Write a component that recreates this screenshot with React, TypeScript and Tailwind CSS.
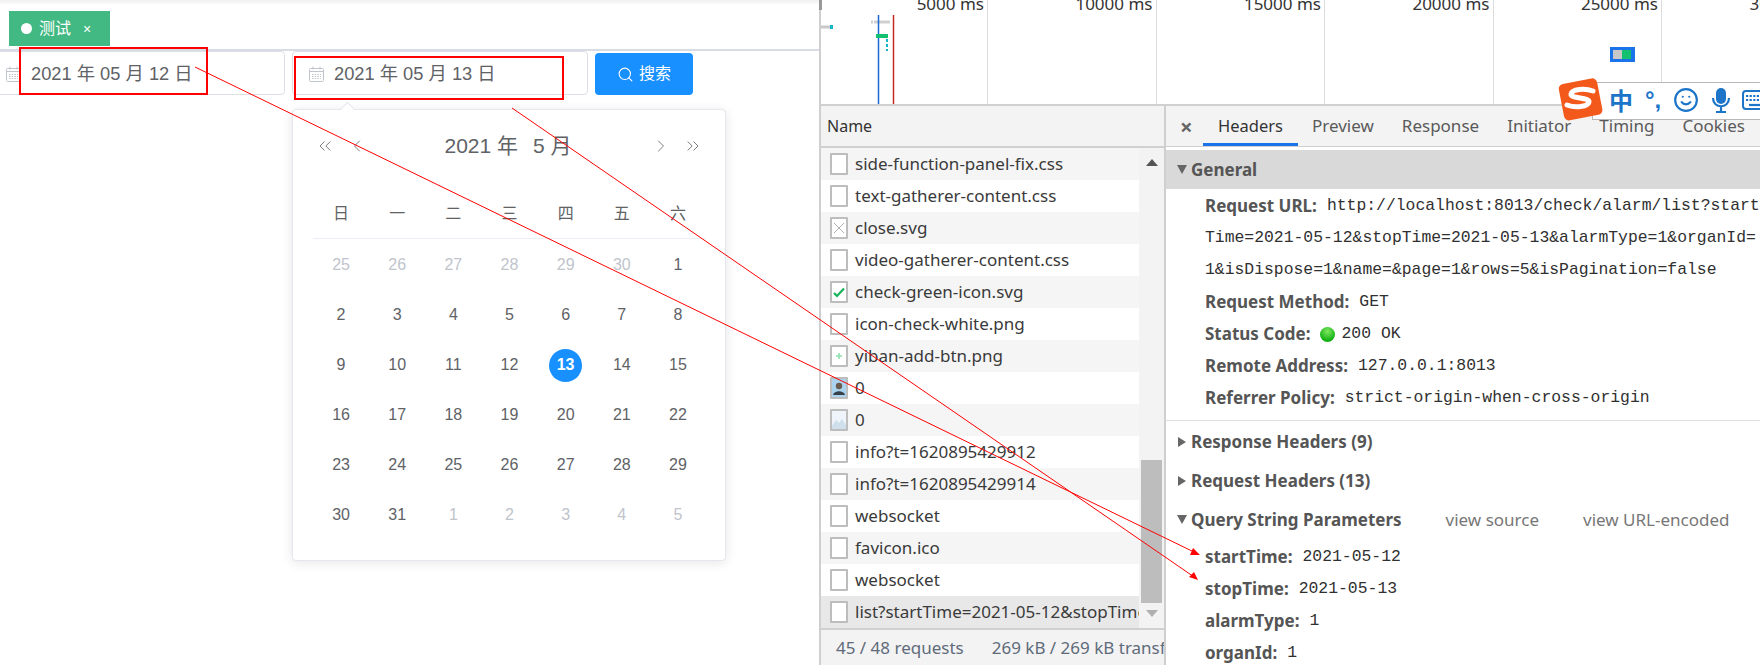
import { ChevronLeft, ChevronRight, ChevronsLeft, ChevronsRight, Search, Smile } from 'lucide-react';

const days = [
  [25, 26, 27, 28, 29, 30, 1],
  [2, 3, 4, 5, 6, 7, 8],
  [9, 10, 11, 12, 13, 14, 15],
  [16, 17, 18, 19, 20, 21, 22],
  [23, 24, 25, 26, 27, 28, 29],
  [30, 31, 1, 2, 3, 4, 5],
];

const requests: { name: string; icon?: string }[] = [
  { name: 'side-function-panel-fix.css' },
  { name: 'text-gatherer-content.css' },
  { name: 'close.svg', icon: 'close' },
  { name: 'video-gatherer-content.css' },
  { name: 'check-green-icon.svg', icon: 'check' },
  { name: 'icon-check-white.png' },
  { name: 'yiban-add-btn.png', icon: 'plus' },
  { name: '0', icon: 'avatar' },
  { name: '0', icon: 'image' },
  { name: 'info?t=1620895429912' },
  { name: 'info?t=1620895429914' },
  { name: 'websocket' },
  { name: 'favicon.ico' },
  { name: 'websocket' },
  { name: 'list?startTime=2021-05-12&stopTime=2021-05-13' },
];

function CalendarIcon() {
  return (
    <svg width="17" height="16" viewBox="0 0 17 16" fill="none" stroke="#c0c4cc" className="shrink-0">
      <rect x="1.5" y="2.5" width="14" height="13" rx="1" />
      <path d="M1.5 5.5h14" />
      <path d="M5 0.5v3M12 0.5v3" />
      <path d="M4 8.5h9M4 10.5h9M4 12.5h9" strokeDasharray="1.5 1.2" />
    </svg>
  );
}

function DateInput({ value, className }: { value: string; className: string }) {
  return (
    <div className={`flex h-[44px] items-center rounded-[4px] border border-[#dcdfe6] bg-white pt-[1px] text-[18.3px] text-[#606266] ${className}`}>
      <CalendarIcon />
      <span className="ml-[9px] whitespace-pre">{value}</span>
    </div>
  );
}

function Calendar() {
  return (
    <div className="relative ml-[292px] mt-[14px] h-[452px] w-[434px] rounded-[4px] border border-[#e4e7ed] bg-white shadow-[0_2px_12px_rgba(0,0,0,0.1)]">
      <div className="absolute -top-[6px] left-[49px] h-[11px] w-[11px] rotate-45 border-l border-t border-[#e4e7ed] bg-white" />
      <div className="relative flex h-[75px] items-center px-[22px] pb-[3px] text-[#606266]">
        <ChevronsLeft size={20} strokeWidth={1} />
        <ChevronLeft size={20} strokeWidth={1} className="ml-[12px]" />
        <div className="flex-1 whitespace-pre pr-[2px] text-center text-[21px]">
          2021 年<span className="ml-[15px]">5 月</span>
        </div>
        <ChevronRight size={20} strokeWidth={1} />
        <ChevronsRight size={20} strokeWidth={1} className="ml-[12px]" />
      </div>
      <div className="ml-[20px] mr-[19px] grid h-[54px] grid-cols-7 items-center border-b border-[#ebeef5] pt-[4px] text-center text-[16px] text-[#606266]">
        {['日', '一', '二', '三', '四', '五', '六'].map((d) => (
          <div key={d}>{d}</div>
        ))}
      </div>
      <div className="ml-[20px] mr-[19px] grid grid-cols-7 pt-[1px] text-center text-[16px]">
        {days.flatMap((week, r) =>
          week.map((d, c) => {
            const muted = (r === 0 && d > 1) || (r === 5 && d < 10);
            const selected = r === 2 && d === 13;
            return (
              <div key={`${r}-${c}`} className="flex h-[50px] items-center justify-center">
                {selected ? (
                  <span className="flex h-[33px] w-[33px] items-center justify-center rounded-full bg-[#1890ff] font-bold text-white">{d}</span>
                ) : (
                  <span className={muted ? 'text-[#c0c4cc]' : 'text-[#606266]'}>{d}</span>
                )}
              </div>
            );
          }),
        )}
      </div>
    </div>
  );
}

function FileIcon({ type }: { type?: string }) {
  return (
    <div className="relative flex h-[22px] w-[18px] shrink-0 items-center justify-center overflow-hidden rounded-[1px] border-2 border-[#bdbdbd] bg-white">
      {type === 'close' && (
        <svg width="14" height="18" viewBox="0 0 14 18" stroke="#b0b0b0" strokeWidth="1">
          <path d="M2 4l10 10M12 4L2 14" />
        </svg>
      )}
      {type === 'check' && (
        <svg width="14" height="18" viewBox="0 0 14 18" fill="none" stroke="#16b45a" strokeWidth="2.2">
          <path d="M2 10l3 3 7-7.5" />
        </svg>
      )}
      {type === 'plus' && (
        <svg width="14" height="18" viewBox="0 0 14 18" fill="none" stroke="#8fe0b0" strokeWidth="1.6">
          <path d="M7 6v6M4 9h6" />
        </svg>
      )}
      {type === 'avatar' && (
        <svg width="14" height="18" viewBox="0 0 14 18">
          <rect width="14" height="18" fill="#a9d3ee" />
          <circle cx="7" cy="7" r="3.2" fill="#6b5a50" />
          <path d="M1 16c1-5 11-5 12 0z" fill="#38404a" />
        </svg>
      )}
      {type === 'image' && (
        <svg width="14" height="18" viewBox="0 0 14 18">
          <rect width="14" height="18" fill="#eef4f9" />
          <path d="M0 15l4-6 3 3 3-4 4 6v4H0z" fill="#cfdfec" />
        </svg>
      )}
    </div>
  );
}

function NamePanel() {
  return (
    <div className="flex w-[345px] shrink-0 flex-col border-r-2 border-[#cfcfcf]">
      <div className="flex h-[42px] items-center border-b-2 border-[#d0d0d0] bg-[#f3f3f3] pl-[6px] text-[16px] text-[#333]">Name</div>
      <div className="relative flex h-[480px]">
        <div className="w-[318px] shrink-0">
          {requests.map((r, i) => {
            const last = i === requests.length - 1;
            const bg = last ? 'bg-[#e8e8e8]' : i % 2 === 0 ? 'bg-[#f5f5f5]' : 'bg-white';
            return (
              <div key={i} className={`flex h-[32px] items-center overflow-hidden whitespace-nowrap pl-[9px] text-[17px] text-[#3a3a3a] ${bg}`}>
                <FileIcon type={r.icon} />
                <span className="ml-[7px]">{r.name}</span>
              </div>
            );
          })}
        </div>
        <div className="flex flex-1 flex-col items-center bg-[#f3f3f3]">
          <div className="mt-[11px] h-0 w-0 border-x-[6px] border-b-[7px] border-x-transparent border-b-[#555]" />
          <div className="mt-[294px] h-[143px] w-[21px] bg-[#bdbdbd]" />
          <div className="mt-[7px] h-0 w-0 border-x-[6px] border-t-[7px] border-x-transparent border-t-[#b0b0b0]" />
        </div>
      </div>
      <div className="flex h-[37px] items-center overflow-hidden whitespace-nowrap border-t-2 border-[#d0d0d0] bg-[#f3f3f3] pl-[15px] text-[17px] text-[#5f6b7a]">
        <span>45 / 48 requests</span>
        <span className="ml-[14px] h-[24px] w-px bg-[#cfcfcf]" />
        <span className="ml-[14px]">269 kB / 269 kB transferred</span>
      </div>
    </div>
  );
}

function KV({ label, value }: { label: string; value: string }) {
  return (
    <div className="flex h-[32px] items-center whitespace-pre pl-[39px]">
      <span className="font-bold text-[#555]">{label}:</span>
      <span className="ml-[10px] font-['Liberation_Mono',monospace] text-[16.4px] text-[#303030]">{value}</span>
    </div>
  );
}

function SectionTitle({ title, open }: { title: string; open?: boolean }) {
  return (
    <div className="flex h-[39px] items-center pl-[11px] font-bold text-[#555]">
      {open ? (
        <span className="h-0 w-0 border-x-[5px] border-t-[9px] border-x-transparent border-t-[#666]" />
      ) : (
        <span className="ml-[1px] h-0 w-0 border-y-[5px] border-l-[8px] border-y-transparent border-l-[#666]" />
      )}
      <span className={open ? 'ml-[4px]' : 'ml-[5px]'}>{title}</span>
    </div>
  );
}

function Details() {
  const tabs = ['Preview', 'Response', 'Initiator', 'Timing', 'Cookies'];
  return (
    <div className="min-w-0 flex-1 overflow-hidden whitespace-nowrap text-[17px]">
      <div className="flex h-[41px] items-center border-b border-[#d0d0d0] bg-[#f3f3f3] text-[#5a5a5a]">
        <span className="ml-[14px] w-[23px] shrink-0 text-[22px] font-bold leading-none text-[#666]">×</span>
        <span className="flex h-full shrink-0 items-center border-b-[3px] border-[#1a73e8] px-[15px] pt-[3px] text-[16.5px] text-[#333]">Headers</span>
        {tabs.map((t) => (
          <span key={t} className="shrink-0 px-[14px]">{t}</span>
        ))}
      </div>
      <div className="mt-[3px] flex h-[39px] items-center bg-[#d9d9d9] pl-[11px] font-bold text-[#555]">
        <span className="h-0 w-0 border-x-[5px] border-t-[9px] border-x-transparent border-t-[#666]" />
        <span className="ml-[4px]">General</span>
      </div>
      <div className="mt-[1px] h-[231px] border-b border-[#e0e0e0]">
        <KV label="Request URL" value="http://localhost:8013/check/alarm/list?start" />
        <div className="flex h-[32px] items-center pl-[39px] font-['Liberation_Mono',monospace] text-[16.4px] text-[#303030]">Time=2021-05-12&amp;stopTime=2021-05-13&amp;alarmType=1&amp;organId=</div>
        <div className="flex h-[32px] items-center pl-[39px] font-['Liberation_Mono',monospace] text-[16.4px] text-[#303030]">1&amp;isDispose=1&amp;name=&amp;page=1&amp;rows=5&amp;isPagination=false</div>
        <KV label="Request Method" value="GET" />
        <div className="flex h-[32px] items-center pl-[39px]">
          <span className="font-bold text-[#555]">Status Code:</span>
          <span className="ml-[9px] h-[15px] w-[15px] rounded-full bg-[radial-gradient(circle_at_50%_30%,#7ee85f,#12b012_70%)]" />
          <span className="ml-[7px] font-['Liberation_Mono',monospace] text-[16.4px] text-[#303030]">200 OK</span>
        </div>
        <KV label="Remote Address" value="127.0.0.1:8013" />
        <KV label="Referrer Policy" value="strict-origin-when-cross-origin" />
      </div>
      <div className="mt-[1px]">
        <SectionTitle title="Response Headers (9)" />
        <SectionTitle title="Request Headers (13)" />
        <div className="flex items-center">
          <SectionTitle title="Query String Parameters" open />
          <span className="ml-[44px] text-[#777]">view source</span>
          <span className="ml-[44px] text-[#777]">view URL-encoded</span>
        </div>
        <div className="pt-[2px]">
          <KV label="startTime" value="2021-05-12" />
          <KV label="stopTime" value="2021-05-13" />
          <KV label="alarmType" value="1" />
          <KV label="organId" value="1" />
        </div>
      </div>
    </div>
  );
}

function Waterfall() {
  const labels = ['5000 ms', '10000 ms', '15000 ms', '20000 ms', '25000 ms', '30000 ms'];
  return (
    <div className="relative flex h-[106px] border-b-2 border-[#d0d0d0] bg-white text-[17px] text-[#333]">
      <div className="absolute -left-[2px] top-0 h-[10px] w-[3px] bg-[#999]" />
      {labels.map((l, i) => (
        <div key={l} className={`-mt-[9px] shrink-0 border-r border-[#dcdcdc] pr-[3px] text-right ${i === 0 ? 'w-[167px]' : 'w-[168.5px]'}`}>{l}</div>
      ))}
      <svg className="absolute left-0 top-0" width="939" height="104">
        <path d="M0 27h9" stroke="#c8c8c8" strokeWidth="3" />
        <path d="M9 27h3" stroke="#18b4c8" strokeWidth="4" />
        <path d="M50 22h2M53 22h16" stroke="#d0d0d0" strokeWidth="3" />
        <path d="M57.5 15v89" stroke="#1a67d2" strokeWidth="1.5" />
        <path d="M72.5 15v89" stroke="#c62828" strokeWidth="1.5" />
        <path d="M55 36h12" stroke="#12c070" strokeWidth="4" />
        <path d="M66 39v12" stroke="#18b4c8" strokeWidth="2" strokeDasharray="3 2" />
        <rect x="789" y="47" width="25" height="15" fill="#1a73e8" />
        <rect x="792" y="50" width="9" height="9" fill="#c8c8c8" />
        <rect x="801" y="50" width="9" height="9" fill="#12c070" />
      </svg>
    </div>
  );
}

function ImeBar() {
  return (
    <div className="absolute left-[1558px] top-[78px] flex h-[44px] w-[202px] items-center">
      <div className="absolute left-[34px] right-0 top-[4px] h-[38px] border-y border-l border-[#b8b8b8] bg-white" />
      <svg className="relative shrink-0" width="46" height="44" viewBox="0 0 46 44">
        <rect x="3" y="3" width="39" height="37" rx="5" fill="#f4591c" transform="rotate(-11 22 21)" />
        <path d="M35 13c-8-3-21-2-22 3-1 5 19 3 18 8-1 5-14 6-22 3" fill="none" stroke="#fff" strokeWidth="5" strokeLinecap="round" />
      </svg>
      <div className="relative flex items-center text-[#1c75c8]">
        <span className="ml-[5px] font-['Noto_Sans_CJK_SC',sans-serif] text-[24px] font-bold leading-none">中</span>
        <span className="ml-[12px] font-['Liberation_Sans',sans-serif] text-[24px] font-bold leading-none">°,</span>
        <Smile size={26} strokeWidth={2} className="ml-[12px]" />
        <svg width="20" height="26" viewBox="0 0 20 26" className="ml-[12px]" fill="none" stroke="currentColor" strokeWidth="2.2">
          <rect x="5" y="1" width="10" height="16" rx="5" fill="currentColor" stroke="none" />
          <path d="M2 11c0 11 16 11 16 0M10 19v5M5 25h10" />
        </svg>
        <svg width="30" height="20" viewBox="0 0 30 20" className="ml-[11px] shrink-0" fill="none" stroke="currentColor">
          <rect x="1" y="1" width="28" height="18" rx="3" strokeWidth="2" />
          <path d="M4 6h22M4 10h22" strokeWidth="2.2" strokeDasharray="2.2 1.4" />
          <path d="M7 15h16" strokeWidth="2.2" />
        </svg>
      </div>
    </div>
  );
}

function Annotations() {
  return (
    <svg className="pointer-events-none absolute left-0 top-0" width="1760" height="665">
      <rect x="20" y="48" width="187" height="46" fill="none" stroke="#ff0000" strokeWidth="2" />
      <rect x="295" y="57" width="268" height="42" fill="none" stroke="#ff0000" strokeWidth="2" />
      <path d="M195 67L1194 552" stroke="#ff0000" strokeWidth="1" />
      <path d="M512 108L1192 575.5" stroke="#ff0000" strokeWidth="1" />
      <path d="M1200 555L1190 555L1193 548z" fill="#ff0000" />
      <path d="M1198 580L1189 577L1194 572z" fill="#ff0000" />
    </svg>
  );
}

export default function App() {
  return (
    <div className="relative flex h-[665px] w-[1760px] overflow-hidden bg-white font-['Liberation_Sans','Noto_Sans_CJK_SC',sans-serif]">
      <div className="w-[819px] shrink-0 overflow-hidden">
        <div className="h-[51px] border-b-2 border-[#d8dce5] bg-white pl-[9px] pt-[11px] shadow-[inset_0_5px_3px_-2px_#f2f2f2]">
          <div className="flex h-[35px] w-[101px] items-center bg-[#42b983] pl-[12px] text-white">
            <span className="h-[11px] w-[11px] rounded-full bg-white" />
            <span className="ml-[7px] text-[16px]">测试</span>
            <span className="ml-[12px] text-[14px] leading-none">×</span>
          </div>
        </div>
        <div className="flex gap-[7px]">
          <DateInput value="2021 年 05 月 12 日" className="-ml-[20px] w-[305px] pl-[24px]" />
          <DateInput value="2021 年 05 月 13 日" className="w-[296px] pl-[15px]" />
          <button className="mt-[2px] flex h-[42px] w-[98px] items-center justify-center gap-[5px] rounded-[4px] bg-[#1890ff] text-[16px] text-white">
            <Search size={17} strokeWidth={1.5} />
            搜索
          </button>
        </div>
        <Calendar />
      </div>
      <div className="flex min-w-0 flex-1 flex-col border-l-2 border-[#cfcfcf] font-['Noto_Sans','Noto_Sans_CJK_SC',sans-serif]">
        <Waterfall />
        <div className="flex min-h-0 flex-1">
          <NamePanel />
          <Details />
        </div>
      </div>
      <ImeBar />
      <Annotations />
    </div>
  );
}
